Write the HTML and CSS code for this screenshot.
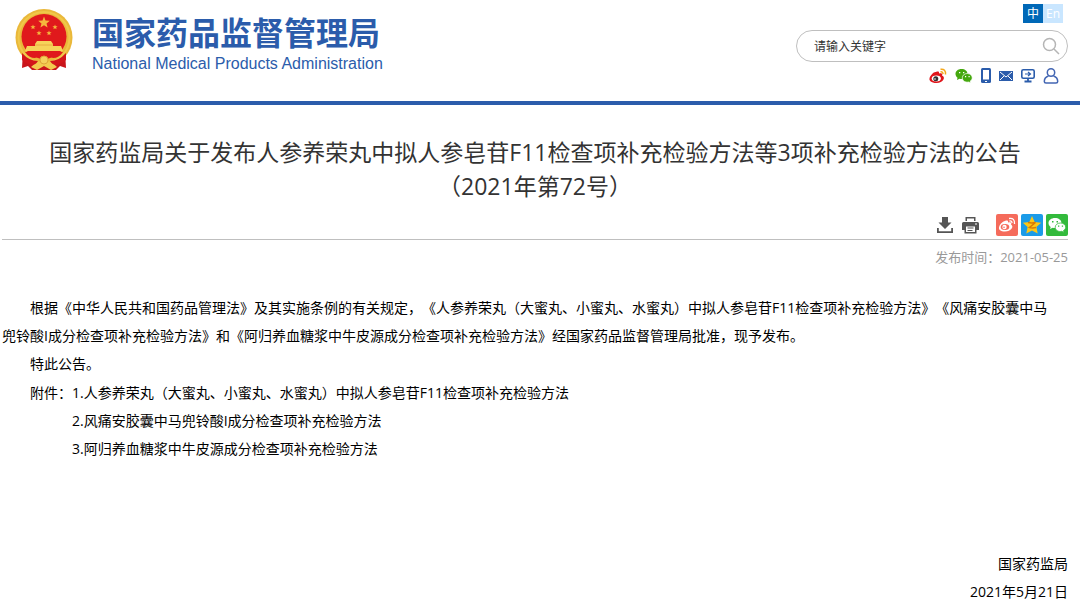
FILE: index.html
```
<!DOCTYPE html>
<html lang="zh-CN">
<head>
    <meta charset="utf-8">
    <title>国家药品监督管理局</title>
    <link rel="stylesheet" href="styles.css">
</head>
<body>
    <header class="header">
        <a href="#" class="logo">
            <svg class="emblem" viewBox="0 0 58 62">
                <path d="M8 42 L7 59 L13 57 L17 61 H41 L45 57 L51 59 L50 42Z" fill="#c9151b"/>
                <circle cx="29" cy="28.5" r="28.5" fill="#eab83a"/>
                <circle cx="29" cy="28.5" r="25.5" fill="none" stroke="#f0c84a" stroke-width="2"/>
                <circle cx="29" cy="27.5" r="22.5" fill="#e0191c"/>
                <path d="M29 7.5l1.5 4 4.3.2-3.3 2.7 1.1 4.1-3.6-2.3-3.6 2.3 1.1-4.1-3.3-2.7 4.3-.2z" fill="#f5b83d"/>
                <path id="star" d="M18 15.5l.7 1.7 1.9.1-1.5 1.2.5 1.8-1.6-1-1.6 1 .5-1.8-1.5-1.2 1.9-.1z" fill="#f5b83d"/>
                <use href="#star" x="6" y="6"/>
                <use href="#star" x="16" y="6"/>
                <use href="#star" x="22" y="0"/>
                <path d="M22 32h14l2 3v2h8l2 5H10l2-5h8v-2z" fill="#f6d35a"/>
                <path d="M20 36h18" stroke="#e5a33a" stroke-width=".8"/>
                <path d="M10 43H48Q44 49 38 49Q34 46 29 46Q24 46 20 49Q14 49 10 43Z" fill="#e0191c"/>
                <path d="M7 44Q14 52 23 52L20 56Q12 56 7 51zM51 44Q44 52 35 52L38 56Q46 56 51 51z" fill="#d3161b"/>
                <path d="M16 58Q22 52 29 54Q36 52 42 58L36 61L29 57L22 61Z" fill="#f2ca4f"/>
                <circle cx="29" cy="51" r="4" fill="#f4d05c" stroke="#dfa53a"/>
            </svg>
            <span class="logo-text">
                <span class="logo-cn">国家药品监督管理局</span>
                <span class="logo-en">National Medical Products Administration</span>
            </span>
        </a>
        <div class="header-right">
            <div class="lang">
                <a href="#" class="lang-item active">中</a>
                <a href="#" class="lang-item">En</a>
            </div>
            <form class="search">
                <input type="text" class="search-input" placeholder="请输入关键字" aria-label="请输入关键字">
                <button type="button" class="search-button" aria-label="搜索">
                    <svg width="18" height="18" viewBox="0 0 18 18" fill="none" stroke="#b5b5b5" stroke-width="1.5">
                        <circle cx="7.5" cy="7.5" r="6"/>
                        <path d="M12 12l5 5"/>
                    </svg>
                </button>
            </form>
            <div class="quick-links">
                <a href="#" aria-label="微博">
                    <svg width="18" height="16" viewBox="0 0 18 16">
                        <path d="M7 4C9 3 10.5 3.5 10 5.5C13 4.5 14 6 13 7.5C17 9 14.5 15 7.5 15C2 15 0 12.5 .5 10.5C1 7.5 4.5 4 6.5 4Z" fill="#e0151b"/>
                        <ellipse cx="7.3" cy="10.5" rx="4.6" ry="3" fill="#fff"/>
                        <circle cx="6.8" cy="10.7" r="2.5" fill="#333"/>
                        <circle cx="6" cy="11" r=".8" fill="#fff"/>
                        <path d="M11.5 1.2Q17 .5 16.5 6.5M11.5 3.8Q14 3.5 14 6" fill="none" stroke="#f5a81c" stroke-width="1.5"/>
                    </svg>
                </a>
                <a href="#" aria-label="微信">
                    <svg width="18" height="16" viewBox="0 0 18 16">
                        <path d="M6.5 1C2.8 1 .5 3.2 .5 6c0 1.5.8 2.8 2 3.7L2 12l2.5-1.3c4 .8 8-1 8-4.7 0-3-2.5-5-6-5z" fill="#45a80f"/>
                        <path d="M12.3 5.5c-3 0-5 2-5 4.3 0 3 3 4.9 6.2 4.2l2.2 1-.5-1.8c1.2-.8 2-2 2-3.4 0-2.4-2.2-4.3-4.9-4.3z" fill="#45a80f" stroke="#fff" stroke-width=".7"/>
                        <path d="M4 4h1.3v1.3H4zM8 4h1.3v1.3H8zM10 8h1.2v1.2H10zM13.5 8h1.2v1.2h-1.2z" fill="#fff"/>
                    </svg>
                </a>
                <a href="#" aria-label="手机">
                    <svg width="10" height="16" viewBox="0 0 10 16">
                        <rect width="10" height="15" rx="1.5" fill="#2b5cab"/>
                        <path d="M2 2h6v9.5H2zM4 13h2v1H4z" fill="#fff"/>
                    </svg>
                </a>
                <a href="#" aria-label="邮箱">
                    <svg width="14" height="16" viewBox="0 0 14 16">
                        <rect y="3" width="14" height="10" fill="#2b5cab"/>
                        <path d="M1 4l6 5 6-5M1 12l4-4M13 12l-4-4" fill="none" stroke="#fff"/>
                    </svg>
                </a>
                <a href="#" aria-label="电脑版">
                    <svg width="14" height="16" viewBox="0 0 14 16" fill="none" stroke="#2b5cab">
                        <rect x=".8" y="1.8" width="12.4" height="8.4" rx="1.5" stroke-width="1.6"/>
                        <path d="M4 6h5M7 4l2.5 2L7 8" stroke-width="1.2"/>
                        <path d="M7 10v3M3.5 13.5h7" stroke-width="1.8"/>
                    </svg>
                </a>
                <a href="#" aria-label="个人中心">
                    <svg width="16" height="16" viewBox="0 0 16 16" fill="none" stroke="#4366b3" stroke-width="1.5">
                        <circle cx="8" cy="4.5" r="3.7"/>
                        <path d="M5.5 8C2.5 9 1.3 11 1.3 13.5Q1.3 15 3 15H13Q14.7 15 14.7 13.5C14.7 11 13.5 9 10.5 8"/>
                    </svg>
                </a>
            </div>
        </div>
    </header>

    <main class="article">
        <h1 class="title">国家药监局关于发布人参养荣丸中拟人参皂苷F11检查项补充检验方法等3项补充检验方法的公告<br>（2021年第72号）</h1>
        <div class="tools">
            <button type="button" class="tool" aria-label="下载">
                <svg width="16" height="18" viewBox="0 0 16 18" fill="#555">
                    <path d="M5 1h6v5.5h3.5L8 13 1.5 6.5H5z"/>
                    <path d="M0 12h1.8v3.2h12.4V12H16v5H0z"/>
                </svg>
            </button>
            <button type="button" class="tool" aria-label="打印">
                <svg width="17" height="18" viewBox="0 0 17 18">
                    <path d="M3.5 1h10v4h-10zM1.5 6h14Q17 6 17 7.5V14h-2.5v3.5h-12V14H0V7.5Q0 6 1.5 6z" fill="#555"/>
                    <path d="M5 2.5h7V6H5zM4 10.5h9V16H4z" fill="#fff"/>
                    <path d="M5.5 12h6M5.5 14.5h5" stroke="#555" stroke-width="1.2"/>
                    <path d="M13 8h2" stroke="#fff"/>
                </svg>
            </button>
            <div class="share">
                <a href="#" class="share-item weibo" aria-label="分享到微博">
                    <svg width="22" height="22" viewBox="0 0 22 22">
                        <path d="M9 7c2-1 3.5-.5 3 1.5 3-1 4 .5 3 2 3.5 2 0 7-6 7-4.5 0-6.5-2-6-4 .5-3 3.5-6 6-6.500z" fill="#fff"/>
                        <ellipse cx="9" cy="13" rx="4.3" ry="3" fill="#f56b5b"/>
                        <circle cx="8.5" cy="13" r="2.2" fill="#fff"/>
                        <circle cx="8" cy="13.3" r=".8" fill="#f56b5b"/>
                        <path d="M13 4.5Q19 3.5 18.5 10M13.5 7Q16 6.5 16 9" fill="none" stroke="#fff" stroke-width="1.3"/>
                    </svg>
                </a>
                <a href="#" class="share-item qzone" aria-label="分享到QQ空间">
                    <svg width="22" height="22" viewBox="0 0 22 22">
                        <path d="M11 2l2.7 6 6.5.7-4.8 4.4 1.3 6.5L11 16.5l-5.7 3.1 1.3-6.5L1.8 8.7l6.5-.7z" fill="#fcc718"/>
                        <path d="M7 8.5q4 .8 7.5 0L8.5 13.5q3 .8 6.5 0" fill="none" stroke="#d87a08" stroke-width="1.5"/>
                    </svg>
                </a>
                <a href="#" class="share-item wechat" aria-label="分享到微信">
                    <svg width="22" height="22" viewBox="0 0 22 22">
                        <path d="M9 4c-3.8 0-6.5 2.2-6.5 5 0 1.6.9 3 2.2 3.9L4 15l2.7-1.3c4.5 1 8.8-1 8.8-4.7 0-3-3-5-6.5-5z" fill="#fff"/>
                        <path d="M14.5 9c-3.2 0-5.3 2-5.3 4.2 0 3 3.2 4.9 6.6 4.1l2.2 1.2-.5-2c1.3-.8 2.2-1.9 2.2-3.3 0-2.4-2.3-4.2-5.2-4.2z" fill="#fff" stroke="#33ba3c" stroke-width=".8"/>
                        <path d="M6 7h1.5v1.5H6zM10.5 7H12v1.5h-1.5zM12 11.5h1.3v1.3H12zM15.8 11.5h1.3v1.3h-1.3z" fill="#33ba3c"/>
                    </svg>
                </a>
            </div>
        </div>
        <p class="date">发布时间：2021-05-25</p>
        <div class="content">
            <p class="indent">根据《中华人民共和国药品管理法》及其实施条例的有关规定，《人参养荣丸（大蜜丸、小蜜丸、水蜜丸）中拟人参皂苷F11检查项补充检验方法》《风痛安胶囊中马兜铃酸I成分检查项补充检验方法》和《阿归养血糖浆中牛皮源成分检查项补充检验方法》经国家药品监督管理局批准，现予发布。</p>
            <p class="indent">特此公告。</p>
            <div class="attachments">
                <p>附件：</p>
                <ul>
                    <li>1.人参养荣丸（大蜜丸、小蜜丸、水蜜丸）中拟人参皂苷F11检查项补充检验方法</li>
                    <li>2.风痛安胶囊中马兜铃酸I成分检查项补充检验方法</li>
                    <li>3.阿归养血糖浆中牛皮源成分检查项补充检验方法</li>
                </ul>
            </div>
            <div class="sign">
                <p>国家药监局</p>
                <p>2021年5月21日</p>
            </div>
        </div>
    </main>
</body>
</html>
```
FILE: styles.css
```
*{
    box-sizing: border-box;
}

body{
    margin: 0;
    background-color: white;
    color: black;
    font-family: "Open Sans", "Noto Sans CJK SC", sans-serif;
    font-size: 14px;
    text-spacing-trim: space-all;
}

p, ul{
    margin: 0;
    padding: 0;
    list-style: none;
}

svg{
    display: block;
}

a{
    color: inherit;
    text-decoration: none;
}

.header{
    display: flex;
    justify-content: space-between;
    align-items: flex-start;
    height: 105px;
    padding: 4px 12px 0 15px;
    border-bottom: 4px solid #2b5cab;
}

.logo{
    display: flex;
    gap: 19px;
    padding-top: 5px;
    color: #2b5cab;
}

.emblem{
    width: 58px;
    height: 62px;
}

.logo-text{
    display: flex;
    flex-direction: column;
    padding-top: 4px;
}

.logo-cn{
    font-size: 32px;
    line-height: 40px;
    font-weight: bold;
}

.logo-en{
    font-family: "Liberation Sans", sans-serif;
    font-size: 16px;
    line-height: 22px;
}

.header-right{
    display: flex;
    flex-direction: column;
    align-items: flex-end;
}

.lang{
    display: flex;
    margin-right: 5px;
}

.lang-item{
    width: 20px;
    height: 19px;
    background-color: #c9e6ff;
    color: white;
    font-size: 12px;
    line-height: 19px;
    text-align: center;
}

.lang-item.active{
    background-color: #0068b7;
}

.search{
    display: flex;
    align-items: center;
    width: 272px;
    height: 32px;
    margin-top: 7px;
    padding: 0 7px 0 17px;
    border: 1px solid #bfbfbf;
    border-radius: 16px;
}

.search-input{
    flex: 1;
    min-width: 0;
    padding: 0;
    border: none;
    outline: none;
    background: none;
    color: #333;
    font-family: inherit;
    font-size: 12px;
}

.search-input::placeholder{
    color: #333;
}

.search-button,
.tool{
    padding: 0;
    border: none;
    background: none;
    cursor: pointer;
}

.quick-links{
    display: flex;
    gap: 8px;
    margin-top: 6px;
    margin-right: 9px;
}

.article{
    padding: 30px 12px 0 2px;
}

.title{
    margin: 0;
    color: #333;
    font-size: 23px;
    line-height: 34px;
    font-weight: normal;
    text-align: center;
}

.tools{
    display: flex;
    justify-content: flex-end;
    align-items: center;
    gap: 9px;
    margin-top: 11px;
    padding-bottom: 3px;
    border-bottom: 1px solid #bfbfbf;
}

.share{
    display: flex;
    gap: 3px;
    margin-left: 8px;
}

.share-item{
    border-radius: 2px;
}

.weibo{
    background-color: #f56b5b;
}

.qzone{
    background-color: #1b9be8;
}

.wechat{
    background-color: #33ba3c;
}

.date{
    margin-top: 7px;
    color: #999;
    font-size: 13px;
    line-height: 20px;
    text-align: right;
}

.content{
    margin-top: 27px;
    line-height: 28px;
}

.indent{
    padding-right: 14px;
    text-indent: 2em;
}

.attachments{
    display: flex;
    margin-top: 1px;
    padding-left: 2em;
}

.sign{
    margin-top: 87px;
    text-align: right;
}
```
